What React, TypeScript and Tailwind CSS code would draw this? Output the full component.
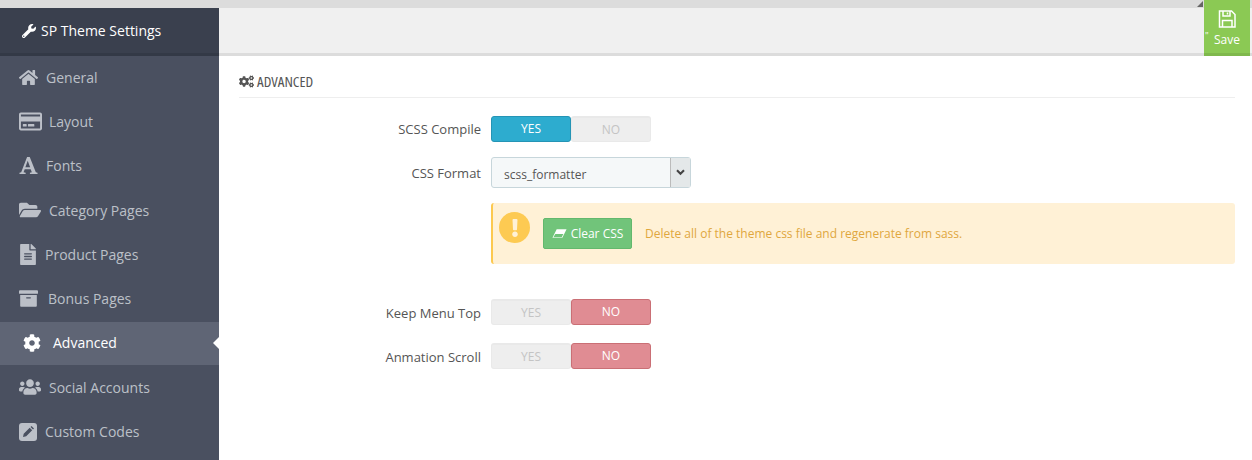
import { FaArchive, FaCog, FaCogs, FaExclamation, FaFileAlt, FaFolderOpen, FaHome, FaRegCreditCard, FaUsers, FaWrench } from 'react-icons/fa'
import type { ReactNode } from 'react'

const menu: { label: string; icon: ReactNode; gap: string; active?: boolean }[] = [
  { label: 'General', icon: <FaHome className="h-[17px] w-[19px]" />, gap: 'w-[27px]' },
  { label: 'Layout', icon: <FaRegCreditCard className="h-[21px] w-[23px]" />, gap: 'w-[30px]' },
  {
    label: 'Fonts',
    icon: (
      <svg viewBox="0 0 20 20" className="h-[19px] w-[19px]" fill="currentColor">
        <path d="M.5 19v-1.400l1.800-.4L8.500 1h2.800l6.400 16.200 1.800.4V19h-8v-1.400l2-.4-1.200-3.200H6l-1.200 3.200 2.200.4V19H.5zM6.700 11.800h5L9.200 5 6.700 11.800z" />
      </svg>
    ),
    gap: 'w-[27px]',
  },
  { label: 'Category Pages', icon: <FaFolderOpen className="h-[20px] w-[22px]" />, gap: 'w-[30px]' },
  { label: 'Product Pages', icon: <FaFileAlt className="h-[21px] w-[18px]" />, gap: 'w-[26px]' },
  { label: 'Bonus Pages', icon: <FaArchive className="h-[19px] w-[19px]" />, gap: 'w-[29px]' },
  { label: 'Advanced', icon: <FaCog className="h-[18px] w-[18px]" />, gap: 'w-[30px]', active: true },
  { label: 'Social Accounts', icon: <FaUsers className="h-[20px] w-[22px]" />, gap: 'w-[30px]' },
  {
    label: 'Custom Codes',
    icon: (
      <svg viewBox="0 0 18 18" className="h-[18px] w-[18px]">
        <rect width="18" height="18" rx="3" fill="currentColor" />
        <path d="M4 14l.7-3.200 6-6 2.500 2.500-6 6L4 14zM11.500 4l1-1 2.500 2.500-1 1L11.500 4z" fill="#4a5060" />
      </svg>
    ),
    gap: 'w-[26px]',
  },
]

function MenuItem({ label, icon, gap, active }: (typeof menu)[number]) {
  return (
    <div
      className={
        active
          ? 'relative mb-[1.5px] flex h-[43px] items-center bg-[#5f6575] pb-[1px] pl-[23px] text-white'
          : 'relative flex h-[44.25px] items-center pb-[1.5px] pl-[19px] text-[#bcc0c8]'
      }
    >
      <span className={`${gap} flex shrink-0 items-center`}>{icon}</span>
      <span className="text-[14px]">{label}</span>
      {active && (
        <span className="absolute right-0 top-[15px] h-0 w-0 border-y-[6px] border-r-[6px] border-y-transparent border-r-white" />
      )}
    </div>
  )
}

function Toggle({ on }: { on: boolean }) {
  const off = 'flex flex-1 items-center justify-center rounded-[3px] border border-t-2 border-[#e9e9e9] bg-[#eeeeee] text-[#c4c4c4]'
  return (
    <div className="flex h-[26px] w-[160px] text-[12px]">
      {on ? (
        <>
          <span className="flex flex-1 items-center justify-center rounded-[3px] border border-[#2594b5] bg-[#2daccf] text-white">YES</span>
          <span className={off}>NO</span>
        </>
      ) : (
        <>
          <span className={off}>YES</span>
          <span className="flex flex-1 items-center justify-center rounded-[3px] border border-[#ca6f75] bg-[#e08c93] text-white">NO</span>
        </>
      )}
    </div>
  )
}

function Row({ label, children, className, labelClass }: { label: string; children: ReactNode; className?: string; labelClass?: string }) {
  return (
    <div className={`flex items-center ${className ?? ''}`}>
      <label className={`w-[252px] pr-[10px] text-right text-[13px] text-[#555] ${labelClass ?? 'pt-[2px]'}`}>{label}</label>
      {children}
    </div>
  )
}

export default function App() {
  return (
    <div className="flex h-[460px] w-[1252px] flex-col overflow-hidden bg-white font-['Open_Sans',sans-serif]">
      <div className="relative h-[8px] shrink-0 bg-[#dcdcdc]">
        <span className="absolute left-[1197px] top-[1px] h-0 w-0 border-b-[6px] border-l-[6px] border-b-[#666] border-l-transparent" />
      </div>
      <div className="flex min-h-0 flex-1">
        <aside className="flex w-[219px] shrink-0 flex-col bg-[#4a5060]">
          <div className="flex h-[48px] shrink-0 items-center gap-[5px] border-b-[3px] border-[#333946] bg-[#3a404e] pl-[22px] text-[14px] font-medium text-white">
            <FaWrench className="h-[14px] w-[14px]" />
            SP Theme Settings
          </div>
          {menu.map((item) => (
            <MenuItem key={item.label} {...item} />
          ))}
        </aside>
        <main className="min-w-0 flex-1">
          <div className="flex h-[48px] items-start justify-end border-b-[3px] border-[#dcdcdc] bg-[#f0f0f0] pr-[2px]">
            <button className="relative -mt-[8px] flex h-[56px] w-[46px] flex-col items-center border-b-[3px] border-[#7fb84c] bg-[#8bc954] pt-[10px] text-[12px] text-white">
              <svg viewBox="0 0 18 18" className="h-[18px] w-[18px]" fill="none" stroke="currentColor" strokeWidth="1.500">
                <path d="M1.500 1h12l3.500 3.500V17H1.500z" />
                <path d="M5 1v5h7V1M9.500 2.500v2M4.500 17v-6.500h9.500V17" />
              </svg>
              <span className="mt-[3px]">Save</span>
              <span className="absolute left-[1px] top-[31px] text-[9px] leading-none">"</span>
            </button>
          </div>
          <div className="pl-[20px] pr-[17px]">
            <h2 className="mt-[15px] flex h-[27px] items-center gap-[3px] border-b border-[#eeeeee] pb-[6px] text-[15px] font-medium text-[#555] [font-stretch:75%]">
              <FaCogs className="h-[15px] w-[15px]" />
              <span className="whitespace-nowrap">ADVANCED</span>
            </h2>
            <Row label="SCSS Compile" className="mt-[18px]">
              <Toggle on />
            </Row>
            <Row label="CSS Format" className="mt-[15px]">
              <div className="flex h-[31px] w-[200px] items-center rounded-[3px] border border-[#c7d6db] bg-[#f5f8f9] pl-[12px] text-[12px] text-[#555]">
                <span className="flex-1 pt-[4px]">scss_formatter</span>
                <span className="flex h-full w-[20px] items-center justify-center border-l border-[#bbb] bg-[#e4e8e9] text-[#444]">
                  <svg viewBox="0 0 10 8" className="h-[7px] w-[9px]" fill="none" stroke="currentColor" strokeWidth="2.400">
                    <path d="M1 1.500l4 4 4-4" />
                  </svg>
                </span>
              </div>
            </Row>
            <div className="ml-[252px] mt-[15px] flex h-[61px] items-start rounded-[3px] border-l-2 border-[#fcc94f] bg-[#fff1d6] pl-[6px] pt-[9px]">
              <span className="flex h-[31px] w-[31px] shrink-0 items-center justify-center rounded-full bg-[#fdca52] text-[#fff1d6]">
                <FaExclamation className="h-[18px] w-[18px]" />
              </span>
              <button className="ml-[13px] mt-[6px] flex h-[31px] w-[89px] items-center justify-center gap-[4px] rounded-[2px] border border-[#63b86d] bg-[#71c47a] text-[12px] text-white">
                <svg viewBox="0 0 16 11" className="h-[11px] w-[15px]">
                  <path d="M5 1h10.500l-4.500 9H.5z" fill="currentColor" />
                  <path d="M3.500 6l-2 3.500h8.800l1.800-3.500z" fill="#71c47a" />
                </svg>
                Clear CSS
              </button>
              <span className="ml-[13px] mt-[13px] text-[12px] text-[#e0a73e]">Delete all of the theme css file and regenerate from sass.</span>
            </div>
            <Row label="Keep Menu Top" className="mt-[35px]" labelClass="pt-[4px]">
              <Toggle on={false} />
            </Row>
            <Row label="Anmation Scroll" className="mt-[18px]" labelClass="pt-[4px]">
              <Toggle on={false} />
            </Row>
          </div>
        </main>
      </div>
    </div>
  )
}
